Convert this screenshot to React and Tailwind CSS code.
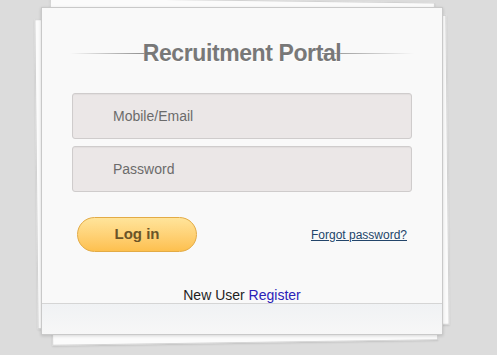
export default function App() {
  return (
    <div
      className="relative w-[497px] h-[355px] overflow-hidden bg-[#dcdcdc]"
      style={{ fontFamily: '"Liberation Sans", Arial, sans-serif' }}
    >
      {/* stacked papers behind the card */}
      <div className="absolute left-[36px] top-[17px] w-[412px] h-[310px] bg-[#fbfbfb] border border-[#d2d2d2] rotate-[-0.6deg] shadow-[0_1px_2px_rgba(0,0,0,0.12)]" />
      <div className="absolute left-[48px] top-[0px] w-[385px] h-[300px] bg-[#fbfbfb] border border-[#d2d2d2] rotate-[0.75deg] shadow-[0_1px_2px_rgba(0,0,0,0.12)]" />
      <div className="absolute left-[50px] top-[43px] w-[386px] h-[300px] bg-[#fbfbfb] border border-[#d2d2d2] rotate-[-0.85deg] shadow-[0_1px_2px_rgba(0,0,0,0.12)]" />

      {/* main card */}
      <div className="absolute left-[41px] top-[7px] w-[402px] h-[328px] flex flex-col bg-[#f9f9f9] border border-[#c9c9c9] shadow-[0_1px_3px_rgba(0,0,0,0.15)]">
        <div className="relative mt-[30px] h-[30px] mx-[28px] flex items-center justify-center">
          <div className="absolute left-0 top-[15px] w-[78px] h-px bg-gradient-to-r from-transparent to-[#8a8a8a]" />
          <div className="absolute right-0 top-[15px] w-[92px] h-px bg-gradient-to-l from-transparent to-[#8a8a8a]" />
          <h1 className="relative text-[23px] font-bold text-[#787878] tracking-[-0.4px] [text-shadow:0_1px_0_#fff]">
            Recruitment Portal
          </h1>
        </div>

        <div className="mt-[25px] px-[30px] flex flex-col gap-[7px]">
          <div className="h-[46px] rounded-[3px] bg-[#ebe7e7] border border-[#cfcccc] shadow-[inset_0_1px_1px_rgba(0,0,0,0.04)] flex items-center pl-[40px] text-[14px] text-[#6b6b6b]">
            Mobile/Email
          </div>
          <div className="h-[46px] rounded-[3px] bg-[#ebe7e7] border border-[#cfcccc] shadow-[inset_0_1px_1px_rgba(0,0,0,0.04)] flex items-center pl-[40px] text-[14px] text-[#6b6b6b]">
            Password
          </div>
        </div>

        <div className="mt-[25px] pl-[35px] pr-[35px] flex items-center justify-between">
          <button className="w-[120px] h-[35px] rounded-full border border-[#e3ab45] bg-gradient-to-b from-[#ffe49a] to-[#fdc04e] text-[15px] font-bold text-[#6a5428]">
            Log in
          </button>
          <a className="text-[12px] text-[#23456a] underline">Forgot password?</a>
        </div>

        <div className="mt-[35px] text-center text-[14px] text-[#1e1e1e] leading-[16px]">
          New User <span className="text-[#2a22b8]">Register</span>
        </div>

        <div className="mt-auto h-[31px] border-t border-[#d5d5d5] bg-gradient-to-b from-[#f0f2f4] to-[#f7f7f7]" />
      </div>
    </div>
  );
}
